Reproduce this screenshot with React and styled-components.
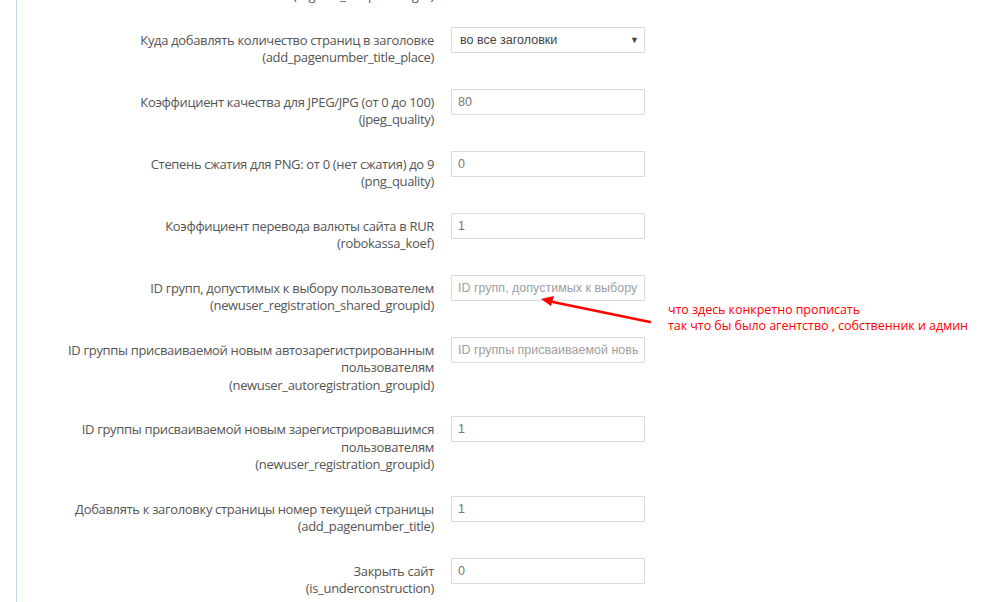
import styled, { createGlobalStyle } from "styled-components";

const rows = [
  { label: ["Куда добавлять количество страниц в заголовке"], key: "add_pagenumber_title_place", value: "во все заголовки", select: true },
  { label: ["Коэффициент качества для JPEG/JPG (от 0 до 100)"], key: "jpeg_quality", value: "80" },
  { label: ["Степень сжатия для PNG: от 0 (нет сжатия) до 9"], key: "png_quality", value: "0" },
  { label: ["Коэффициент перевода валюты сайта в RUR"], key: "robokassa_koef", value: "1" },
  { label: ["ID групп, допустимых к выбору пользователем"], key: "newuser_registration_shared_groupid", placeholder: "ID групп, допустимых к выбору пользователем" },
  { label: ["ID группы присваиваемой новым автозарегистрированным", "пользователям"], key: "newuser_autoregistration_groupid", placeholder: "ID группы присваиваемой новым автозарегистрированным пользователям" },
  { label: ["ID группы присваиваемой новым зарегистрировавшимся", "пользователям"], key: "newuser_registration_groupid", value: "1" },
  { label: ["Добавлять к заголовку страницы номер текущей страницы"], key: "add_pagenumber_title", value: "1" },
  { label: ["Закрыть сайт"], key: "is_underconstruction", value: "0" },
];

const App = () => {
  return (
    <>
      <GlobalStyle />
      <Page>
        <Panel>
          <Row>
            <Label>
              <Key>(register_minpasslength)</Key>
            </Label>
          </Row>
          {rows.map((r) => (
            <Row key={r.key}>
              <Label>
                {r.label.map((l) => (
                  <span key={l}>{l}</span>
                ))}
                <Key>({r.key})</Key>
              </Label>
              <Field>
                {r.select ? (
                  <Select>
                    {r.value}
                    <Caret>▼</Caret>
                  </Select>
                ) : (
                  <Input defaultValue={r.value} placeholder={r.placeholder} />
                )}
              </Field>
            </Row>
          ))}
        </Panel>
        <Note>
          <svg width="120" height="40" viewBox="0 0 120 40">
            <line x1="8" y1="5" x2="110" y2="26" stroke="#ff0000" strokeWidth="2.5" strokeLinecap="round" />
            <polygon points="1,3 14,0 11,10" fill="#ff0000" />
          </svg>
          <NoteText>
            <span>что здесь конкретно прописать</span>
            <span>так что бы было агентство , собственник и админ</span>
          </NoteText>
        </Note>
      </Page>
    </>
  );
};

export default App;

const GlobalStyle = createGlobalStyle`
  html, body {
    margin: 0;
    padding: 0;
    background: #fff;
    overflow: hidden;
  }
`;

const Page = styled.div`
  position: relative;
  width: 1000px;
  height: 602px;
  overflow: hidden;
  background: #fff;
`;

const Panel = styled.div`
  margin-left: 16px;
  margin-top: -18px;
  border-left: 1px solid #c9d5e8;
  min-height: 700px;
  display: flex;
  flex-direction: column;
  gap: 22px;
`;

const Row = styled.div`
  display: grid;
  grid-template-columns: 417px 194px;
  column-gap: 17px;
  align-items: start;
`;

const Label = styled.div`
  display: flex;
  flex-direction: column;
  align-items: flex-end;
  text-align: right;
  padding-top: 5px;
  font-family: "Open Sans", sans-serif;
  font-size: 13px;
  letter-spacing: -0.33px;
  line-height: 17.5px;
  color: #555;
  white-space: nowrap;
`;

const Key = styled.span`
  color: #555;
`;

const Field = styled.div`
  display: flex;
`;

const Input = styled.input`
  box-sizing: border-box;
  width: 194px;
  height: 26px;
  border: 1px solid #dcdcdc;
  padding: 0 6px;
  font-family: "Liberation Sans", Arial, sans-serif;
  font-size: 12.5px;
  color: #777;
  outline: none;
  &::placeholder {
    color: #a0a0a0;
  }
`;

const Select = styled.div`
  box-sizing: border-box;
  width: 194px;
  height: 26px;
  border: 1px solid #dcdcdc;
  padding: 0 5px 0 8px;
  display: flex;
  align-items: center;
  justify-content: space-between;
  font-family: "Liberation Sans", Arial, sans-serif;
  font-size: 12.5px;
  color: #444;
`;

const Caret = styled.span`
  font-size: 9px;
  color: #444;
`;

const Note = styled.div`
  position: absolute;
  left: 540px;
  top: 296px;
  display: flex;
  align-items: flex-start;
`;

const NoteText = styled.div`
  display: flex;
  flex-direction: column;
  margin-left: 8px;
  margin-top: 6px;
  font-family: "Open Sans", sans-serif;
  font-size: 12.5px;
  letter-spacing: -0.05px;
  line-height: 16px;
  color: #ff0000;
`;
